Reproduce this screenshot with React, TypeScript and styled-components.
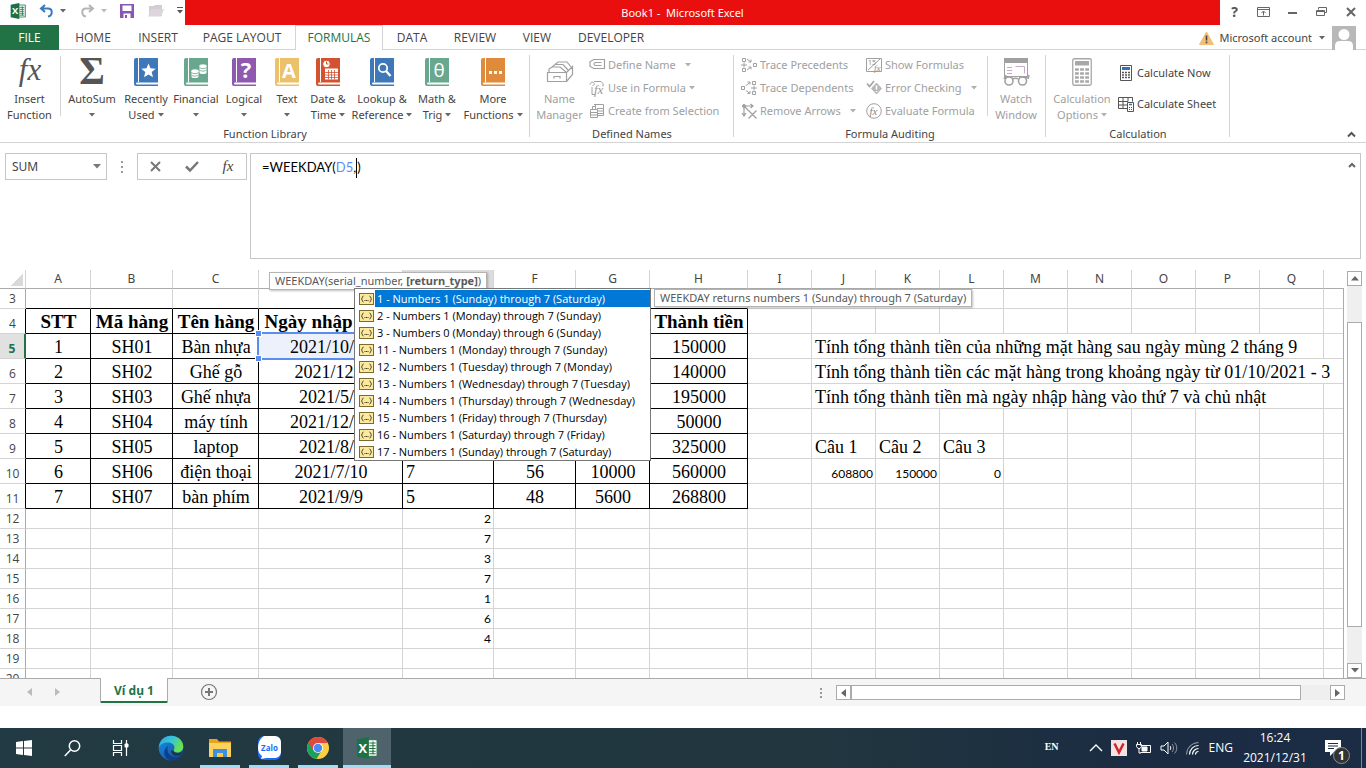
import React from "react";
import styled, { createGlobalStyle, css } from "styled-components";

const ui = `"Noto Sans", "Open Sans", sans-serif`;
const narrow = `"Open Sans", "Noto Sans", sans-serif`;
const serif = `"Liberation Serif", serif`;
const calibri = `Lato, "Open Sans", sans-serif`;
const line = "#d4d4d4";
const edge = "#ababab";
const green = "#217346";

const GlobalStyle = createGlobalStyle`
  *, *::before, *::after { box-sizing: border-box; }
  body { margin: 0; background: #fff; color: #444; font-family: ${ui}; font-size: 11px; line-height: 16px; }
  button, input, textarea { font: inherit; color: inherit; margin: 0; padding: 0; border: 0; background: none; border-radius: 0; outline: 0; }
  svg { display: block; flex: none; overflow: visible; }
`;

const Window = styled.div`
  display: flex;
  flex-direction: column;
  height: 100vh;
  min-height: 480px;
  overflow: hidden;
`;

/* ---------- title bar ---------- */

const TitleBar = styled.header`
  display: flex;
  height: 25px;
  flex: none;
`;
const QuickAccess = styled.div`
  display: flex;
  align-items: center;
  width: 185px;
  padding: 0 2px 4px 10px;
  justify-content: space-between;
`;
const IconButton = styled.button`
  display: flex;
  align-items: center;
  justify-content: center;
  gap: 6px;
`;
const Title = styled.h1`
  flex: 1;
  margin: 0;
  padding-right: 40px;
  background: #e90f0f;
  color: #fff;
  font-size: 11px;
  font-weight: 400;
  line-height: 26px;
  text-align: center;
  white-space: pre;
`;
const WindowButtons = styled.div`
  display: flex;
  padding-right: 1px;
`;
const WindowButton = styled(IconButton)`
  width: 29px;
  height: 23px;
  font-size: 14px;
  font-weight: 700;
  color: #555;
`;

/* ---------- ribbon tabs ---------- */

const TabRow = styled.nav`
  display: flex;
  flex: none;
  height: 25px;
  box-shadow: inset 0 -1px ${line};
  font-family: ${narrow};
  font-size: 12px;
`;
const Tab = styled.button<{ $w: number; $kind?: "file" | "active" }>`
  width: ${(p) => p.$w}px;
  height: 25px;
  ${(p) => p.$kind === "file" && css`background: ${green}; color: #fff;`}
  ${(p) =>
    p.$kind === "active" &&
    css`background: #fff; color: ${green}; border: 1px solid ${line}; border-bottom: 0;`}
`;
const Account = styled.div`
  display: flex;
  align-items: center;
  gap: 5px;
  margin-left: auto;
  padding-right: 10px;
  font-family: ${ui};
  font-size: 11px;
`;
const AccountButton = styled(IconButton)`
  gap: 7px;
  margin-right: 2px;
`;

/* ---------- ribbon ---------- */

const Ribbon = styled.section`
  display: flex;
  flex: none;
  height: 93px;
  border-bottom: 1px solid ${line};
`;
const Group = styled.div<{ $w: number }>`
  display: flex;
  flex-direction: column;
  flex: none;
  width: ${(p) => p.$w}px;
  padding-top: 6px;
  background: linear-gradient(${line}, ${line}) right 5px / 1px 82px no-repeat;
`;
const GroupBody = styled.div<{ $indent?: boolean }>`
  display: flex;
  height: 70px;
  padding-left: ${(p) => (p.$indent ? 7 : 0)}px;
`;
const GroupLabel = styled.div`
  height: 16px;
  text-align: center;
`;
const Big = styled.button<{ $w: number; $off?: boolean }>`
  display: flex;
  flex-direction: column;
  align-items: center;
  width: ${(p) => p.$w}px;
  flex: none;
  color: ${(p) => (p.$off ? "#a0a0a0" : "#444")};
  white-space: nowrap;
`;
const BigIcon = styled.span`
  display: flex;
  align-items: center;
  justify-content: center;
  height: 32px;
  margin-bottom: 3px;
`;
const BigLine = styled.span`
  display: flex;
  align-items: center;
  gap: 3px;
  height: 16px;
`;
const Rule = styled.i`
  width: 1px;
  height: 60px;
  margin: 0 1px;
  background: ${line};
`;
const SmallColumn = styled.div<{ $w: number; $loose?: boolean }>`
  display: flex;
  flex-direction: column;
  flex: none;
  width: ${(p) => p.$w}px;
  gap: ${(p) => (p.$loose ? 15 : 7)}px;
  padding-top: ${(p) => (p.$loose ? 9 : 1)}px;
`;
const Small = styled.button<{ $off?: boolean; $far?: boolean }>`
  display: flex;
  align-items: center;
  gap: 3px;
  height: 16px;
  color: ${(p) => (p.$off ? "#a0a0a0" : "#444")};
  white-space: nowrap;
  ${(p) => p.$far && css`svg:last-child { margin-left: 6px; }`}
`;
const IconSlot = styled.span`
  display: flex;
  justify-content: center;
  width: 16px;
`;
const Collapse = styled(IconButton)`
  margin: auto 10px 4px auto;
`;

/* ---------- formula bar ---------- */

const FormulaRow = styled.section`
  display: flex;
  flex: none;
  align-items: flex-start;
  padding: 10px 5px 11px;
`;
const NameBox = styled.div`
  display: flex;
  align-items: center;
  width: 102px;
  height: 27px;
  padding: 0 5px 0 6px;
  border: 1px solid #c6c6c6;
`;
const NameInput = styled.input`
  flex: 1;
  min-width: 0;
  font-size: 12px;
`;
const Dots = styled.span`
  display: flex;
  align-items: center;
  justify-content: center;
  width: 30px;
  height: 27px;
`;
const EditButtons = styled.div`
  display: flex;
  width: 110px;
  height: 27px;
  margin-right: 3px;
  border: 1px solid #c6c6c6;
  & > button { flex: 1; }
`;
const FormulaBox = styled.div`
  position: relative;
  flex: 1;
  height: 106px;
  border: 1px solid #c6c6c6;
  color: #000;
  font-family: ${calibri};
  font-size: 13px;
  line-height: 18px;
`;
const FormulaInput = styled.textarea`
  display: block;
  width: 100%;
  height: 100%;
  padding: 4px 28px 4px 11px;
  color: transparent;
  resize: none;
`;
const FormulaPaint = styled.div`
  position: absolute;
  inset: 0;
  display: flex;
  align-items: flex-start;
  padding: 4px 28px 4px 11px;
  pointer-events: none;
`;
const Ref = styled.span`
  color: #5b8ff9;
`;
const Caret = styled.i`
  width: 1px;
  height: 20px;
  background: #000;
`;
const BoxArrow = styled(IconButton)`
  position: absolute;
  top: 8px;
  right: 4px;
`;

/* ---------- sheet ---------- */

const SheetArea = styled.section`
  position: relative;
  display: flex;
  flex: 1;
  min-height: 0;
  border-bottom: 1px solid ${edge};
`;
const SheetClip = styled.div`
  flex: 1;
  overflow: hidden;
  position: relative;
`;
const Sheet = styled.table`
  table-layout: fixed;
  width: 1600px;
  border-collapse: separate;
  border-spacing: 0;
  color: #000;
`;
const ColHead = styled.th<{ $on?: boolean }>`
  height: 19px;
  padding: 0;
  border-right: 1px solid ${line};
  border-bottom: 1px solid ${edge};
  background: ${(p) => (p.$on ? "#dcdcdc" : "#fff")};
  color: #444;
  font-size: 12px;
  font-weight: 400;
  line-height: 18px;
`;
const Corner = styled(ColHead)`
  background: linear-gradient(135deg, transparent 50%, #d9d9d9 50%) 11px 4px / 12px 12px no-repeat;
`;
const RowHead = styled.th<{ $on?: boolean; $black?: boolean }>`
  padding: 0;
  border-right: 1px solid ${(p) => (p.$black ? "#000" : edge)};
  border-bottom: 1px solid ${line};
  color: #444;
  font-family: ${narrow};
  font-size: 12px;
  font-weight: 400;
  line-height: 18px;
  vertical-align: bottom;
  ${(p) =>
    p.$on &&
    css`background: #e1e1e1; color: ${green}; font-weight: 700; border-right: 2px solid ${green};`}
`;
const Row = styled.tr<{ $h: number }>`
  height: ${(p) => p.$h}px;
`;
const Cell = styled.td<{ $box?: boolean; $under?: boolean; $align?: string; $calibri?: boolean; $bold?: boolean; $ref?: boolean }>`
  position: ${(p) => (p.$ref ? "relative" : "static")};
  padding: ${(p) => (p.$calibri ? 0 : 2)}px 2px 0 3px;
  border-right: 1px solid ${(p) => (p.$box ? "#000" : line)};
  border-bottom: 1px solid ${(p) => (p.$box || p.$under ? "#000" : line)};
  background: ${(p) => (p.$ref ? "#edf1fb" : "#fff")};
  font-family: ${(p) => (p.$calibri ? calibri : serif)};
  font-size: ${(p) => (p.$calibri ? 12 : p.$bold ? 19 : 18)}px;
  font-weight: ${(p) => (p.$bold ? 700 : 400)};
  line-height: ${(p) => (p.$calibri ? 18 : p.$under ? 16 : 20)}px;
  text-align: ${(p) => p.$align || "left"};
  vertical-align: ${(p) => (p.$calibri ? "bottom" : "middle")};
  white-space: nowrap;
  overflow: ${(p) => (p.$ref ? "visible" : "hidden")};
  ${(p) => p.$bold && css`padding-left: 2px; padding-right: 1px;`}
`;
const RefFrame = styled.span`
  position: absolute;
  inset: -2px;
  border: 2px solid #5b8def;
`;
const Handle = styled.i<{ $at: string }>`
  position: absolute;
  width: 7px;
  height: 7px;
  background: #5b8def;
  border: 1px solid #fff;
  ${(p) => (p.$at.includes("t") ? "top: -4px;" : "bottom: -4px;")}
  ${(p) => (p.$at.includes("l") ? "left: -4px;" : "right: -4px;")}
`;
const SideBar = styled.div`
  display: flex;
  flex-direction: column;
  flex: none;
  width: 22px;
  padding: 1px 4px 0 3px;
`;
const SideEdge = styled.i`
  flex: none;
  width: 1px;
  margin-top: 18px;
  background: ${edge};
`;
const ScrollButton = styled(IconButton)`
  flex: none;
  width: 15px;
  height: 15px;
  border: 1px solid ${edge};
  background: #fff;
`;
const Track = styled.div<{ $grow: number }>`
  flex: ${(p) => p.$grow} 1 0;
  background: #efefef;
`;
const Thumb = styled.div<{ $grow: number }>`
  flex: ${(p) => p.$grow} 1 0;
  border: 1px solid ${edge};
  background: #fff;
`;

/* ---------- floating helpers ---------- */

const Tip = styled.div<{ $x: number; $y: number }>`
  position: absolute;
  left: ${(p) => p.$x}px;
  top: ${(p) => p.$y}px;
  height: 18px;
  padding: 0 5px;
  border: 1px solid #b4b4b4;
  background: #fff;
  box-shadow: 1px 1px 2px rgba(0, 0, 0, 0.25);
  color: #595959;
  line-height: 15px;
  white-space: nowrap;
`;
const Options = styled.ul`
  position: absolute;
  left: 354px;
  top: 18px;
  width: 297px;
  margin: 0;
  padding: 1px 0 0;
  border: 1px solid #777;
  background: #fff;
  color: #000;
  font-family: ${narrow};
  list-style: none;
`;
const Option = styled.li`
  display: flex;
  align-items: center;
  height: 17px;
  padding-left: 4px;
`;
const OptionText = styled.span<{ $on?: boolean }>`
  flex: 1;
  height: 17px;
  margin-left: 1px;
  padding-left: 2px;
  line-height: 18px;
  ${(p) => p.$on && css`background: #0078d7; color: #fff;`}
`;

/* ---------- sheet tabs ---------- */

const SheetTabs = styled.section`
  display: flex;
  flex: none;
  align-items: flex-start;
  height: 27px;
  margin-bottom: 22px;
  background: #f5f5f5;
`;
const TabArrows = styled.div`
  display: flex;
  align-items: center;
  gap: 23px;
  width: 100px;
  height: 26px;
  padding-left: 27px;
`;
const SheetTab = styled.button`
  position: relative;
  height: 25px;
  width: 68px;
  margin-top: -1px;
  padding-top: 1px;
  border: solid ${edge};
  border-width: 0 1px;
  box-shadow: inset 0 -2px ${green};
  background: #fff;
  color: ${green};
  font-size: 12px;
  font-weight: 700;
`;
const AddSheet = styled(IconButton)`
  height: 26px;
  margin-left: 32px;
`;
const HScroll = styled.div`
  display: flex;
  align-items: center;
  width: 539px;
  height: 27px;
  margin: 0 21px 0 auto;
  & > div { height: 15px; }
`;

/* ---------- taskbar ---------- */

const Taskbar = styled.footer`
  display: flex;
  flex: none;
  height: 40px;
  background: linear-gradient(90deg, #223a43 0%, #21363f 60%, #1a2b42 85%, #1b2c45 100%);
  color: #fff;
`;
const Apps = styled.div`
  display: flex;
  gap: 1px;
  margin-left: 3px;
`;
const TaskButton = styled(IconButton)<{ $state?: "open" | "front" }>`
  width: 48px;
  height: 40px;
  background: ${(p) => (p.$state === "front" ? "#4f636c" : "none")};
  ${(p) =>
    p.$state === "open" &&
    css`background: linear-gradient(#9fdcf5, #9fdcf5) center bottom / 40px 3px no-repeat;`}
  ${(p) => p.$state === "front" && css`box-shadow: inset 0 -3px #9fdcf5;`}
`;
const Tray = styled.div`
  display: flex;
  align-items: center;
  margin-left: auto;
  gap: 8px;
  font-family: ${narrow};
  font-size: 12px;
`;
const InputMode = styled.span`
  margin: 0 22px 4px 0;
  font: 700 10px ${serif};
`;
const Language = styled.span`
  margin-left: 2px;
`;
const Clock = styled.time`
  width: 68px;
  text-align: center;
  line-height: 20px;
`;
const Notify = styled(IconButton)`
  position: relative;
  width: 45px;
  height: 40px;
  margin-right: 4px;
  padding-right: 12px;
  border-right: 1px solid #7b8795;
`;
const Badge = styled.span`
  position: absolute;
  right: 11px;
  bottom: 4px;
  width: 17px;
  height: 17px;
  border: 1px solid #8c8f94;
  border-radius: 9px;
  background: #333;
  font-weight: 700;
  line-height: 15px;
`;

/* ---------- icons ---------- */

const Down = ({ c = "#666" }: { c?: string }) => (
  <svg width="6" height="4"><path d="M0 0h6L3 3.5z" fill={c} /></svg>
);

const ExcelLogo = ({ size }: { size: number }) => (
  <svg width={size} height={size} viewBox="0 0 24 24">
    <path d="M13 3h10v18H13z" fill="#fff" stroke={green} strokeWidth="1.2" />
    <path d="M14.5 6.5h7M14.5 9.5h7M14.5 12.5h7M14.5 15.5h7M14.5 18.2h7M18.5 5v14" stroke={green} strokeWidth="1.2" />
    <path d="M14 0v24L1 21.5v-19z" fill="#1e7145" />
    <text x="7.5" y="17" fontSize="14" fontWeight="700" fontFamily="Open Sans" fill="#fff" textAnchor="middle">X</text>
  </svg>
);

const Book = ({ color, children }: { color: string; children: React.ReactNode }) => (
  <svg width="24" height="28" viewBox="0 0 24 28">
    <path d="M2 0h22v28H2a2 2 0 0 1-2-2V2a2 2 0 0 1 2-2z" fill={color} />
    <path d="M4.5 0v24" stroke="#fff" />
    <path d="M24 24.5H3a1 1 0 0 0 0 2h21z" fill="#fff" />
    {children}
  </svg>
);
const BookText = ({ t, size = 20 }: { t: string; size?: number }) => (
  <text x="14" y="19.5" fontSize={size} fontWeight="700" fontFamily="Open Sans" fill="#fff" textAnchor="middle">{t}</text>
);

const Fx = ({ w, h, size, color = "#555" }: { w: number; h: number; size: number; color?: string }) => (
  <svg width={w} height={h}>
    <text x={w / 2} y={h * 0.74} fontSize={size} fontStyle="italic" fontFamily="Liberation Serif" fill={color} textAnchor="middle">fx</text>
  </svg>
);

const S = ({ children, c = "#a0a0a0", w = 16, h = 16 }: { children: React.ReactNode; c?: string; w?: number; h?: number }) => (
  <svg width={w} height={h} viewBox={`0 0 ${w} ${h}`} fill="none" stroke={c} strokeWidth="1">{children}</svg>
);

const DefineIcon = () => (
  <S><path d="M5 2.5h10.500v9H5L1 9.500V4.500zM12.500 5.500h-6a1.500 1.500 0 0 0 0 3h6" strokeWidth="1.200" /></S>
);
const UseIcon = () => (
  <S>
    <path d="M1 4.500c0-2 2-3 3.500-2s1 3-1 3M5 1.500h7l2 2v3M3 7v7.500h3" />
    <text x="5" y="14" fontSize="13" fontStyle="italic" fontFamily="Liberation Serif" fill="#999" stroke="none">fx</text>
  </S>
);
const CreateIcon = () => (
  <S>
    <path d="M5 1.500h9.500v11H9" />
    <path d="M1.500 6.500h7v8h-7zM1.500 9.500h7M1.500 12h7M3.500 6.500v-3h3M6.500 1.500v5" />
    <path d="M8 5.500h6M8 8h6M8 10.500h6" />
  </S>
);
const Precedents = () => (
  <S>
    <path d="M1.500 1.500h3v3h-3zM1.500 11.500h3v3h-3zM12.500 6.500h3v3h-3zM0 8h6M3 5.500v5" />
    <path d="M6 2l4 3M10 2.500V5H7.500M6 13l4-3M7.500 10H10v2.500" />
  </S>
);
const Dependents = () => (
  <S>
    <path d="M11.500 1.500h3v3h-3zM11.500 11.500h3v3h-3zM.5 6.500h3v3h-3zM10 8h6M13 5.500v5" />
    <path d="M5 5.500l4-3M6.500 2H9v2.500M5 10.500l4 3M9 11v2.500H6.500" />
  </S>
);
const RemoveArrows = () => (
  <S>
    <path d="M3 3v9M1 10l2 3 2-3M3 3h9M9.500 1L12 3 9.500 5M3 3l6 6M7.500 7.500l8 8M15.500 7.500l-8 8" strokeWidth="1.200" />
    <circle cx="3" cy="3" r="1.500" fill="#a0a0a0" />
  </S>
);
const ShowFormulas = () => (
  <S>
    <path d="M.5 1.500h15v13H.5zM2 13L14 2" />
    <text x="2" y="8" fontSize="7" fontFamily="Open Sans" fill="#888" stroke="none">15</text>
    <text x="8" y="14" fontSize="9" fontStyle="italic" fontFamily="Liberation Serif" fill="#888" stroke="none">fx</text>
  </S>
);
const ErrorChecking = () => (
  <S>
    <path d="M1 3.500l2.500 3L8 1" strokeWidth="1.500" />
    <path d="M10.500 3l5 5.500-5 5.500-5-5.500z" fill="#b8b8b8" stroke="#b8b8b8" />
    <path d="M10.500 5.500v4M10.500 11v1" stroke="#fff" strokeWidth="1.500" />
  </S>
);
const Evaluate = () => (
  <S>
    <circle cx="8" cy="8" r="7.300" />
    <text x="7.500" y="11.500" fontSize="11" fontStyle="italic" fontFamily="Liberation Serif" fill="#888" stroke="none" textAnchor="middle">fx</text>
  </S>
);
const NameManager = () => (
  <S w={28} h={24}>
    <path d="M1.500 12.500h19v9h-19zM20.500 12.500l6-6v8l-6 7M8 18.500v-2h6v2" strokeWidth="1.200" />
    <path d="M3 12V9l3-2h8l6 5M6 7l3-2.500h8l5.500 6M9 4.500L12 2h9l4 5" strokeWidth="1.200" />
  </S>
);
const Watch = () => (
  <S w={28} h={30}>
    <path d="M2.500 1.500h23v18h-23z" />
    <path d="M2 1h24v5H2z" fill="#a0a0a0" stroke="none" />
    <path d="M5 10.500h5M5 13.500h5M5 16.500h5M13.500 9.500h9v7" stroke="#c9a9c9" />
    <path d="M2.500 20.500h8M17.500 20.500h8M11 22c1-1 4-1 5 0M2 22l2-4M26 22l1-4" strokeWidth="1.500" />
    <circle cx="7" cy="24" r="4" fill="#fff" strokeWidth="1.600" />
    <circle cx="20.500" cy="24" r="4" fill="#fff" strokeWidth="1.600" />
  </S>
);
const Calculator = ({ w, h, c, screen }: { w: number; h: number; c: string; screen: string }) => (
  <svg width={w} height={h} viewBox="0 0 20 28" preserveAspectRatio="none">
    <rect x=".75" y=".75" width="18.500" height="26.500" rx="1.500" fill="#fff" stroke={c} strokeWidth="1.300" />
    <path d="M3 3h14v4.500H3z" fill={screen} />
    <path d="M3 11.500h14M3 15.500h14M3 19.500h14M3 23.500h14" stroke={c} strokeWidth="2.600" strokeDasharray="3.800 1.300" />
  </svg>
);
const SmallCalculator = () => (
  <IconSlot>
    <S w={12} h={16} c="#555">
      <path d="M.5.5h11v15H.5z" fill="#fff" />
      <path d="M2 2h8v3H2z" fill="#2e75b6" stroke="none" />
      <path d="M2 7.500h8M2 10h8M2 12.500h8" strokeWidth="1.500" strokeDasharray="2 1" />
    </S>
  </IconSlot>
);
const CalcSheet = () => (
  <S w={16} h={16} c="#555">
    <path d="M10 12.500H.5v-11h14v4M.5 5.500H10M.5 9H9M5 1.500v11M10 1.500v4" />
    <path d="M9.500 6.500h6v9h-6z" fill="#fff" />
    <path d="M11 8.500h3" stroke="#2e75b6" strokeWidth="1.500" />
    <path d="M11 11.500h3M11 13.500h3" strokeDasharray="1 1" />
  </S>
);
const BookDate = () => (
  <Book color="#d35230">
    <path d="M9 10.500h13v11H9z" fill="#fff" />
    <path d="M9 14.500h13M9 17h13M9 19.500h13M12.500 12v9.500M15.500 12v9.500M18.500 12v9.500" stroke="#d35230" strokeWidth=".8" />
    <circle cx="10.500" cy="6" r="3.800" fill="#fff" stroke="#d35230" />
    <path d="M10.500 3.500V6h2" stroke="#d35230" fill="none" />
  </Book>
);
const BookMoney = () => (
  <Book color="#6aa78f">
    <path d="M15.500 8.500v6c0 2 7 2 7 0v-6" fill="#fff" />
    <ellipse cx="19" cy="8" rx="3.700" ry="1.700" fill="#fff" />
    <path d="M15.500 9.500c1 1.500 6 1.500 7 0M15.500 12c1 1.500 6 1.500 7 0" stroke="#6aa78f" strokeWidth=".8" fill="none" />
    <path d="M7.500 13v5.500c0 2 7 2 7 0V13" fill="#fff" />
    <ellipse cx="11" cy="13" rx="3.700" ry="1.700" fill="#fff" />
    <path d="M7.500 14.500c1 1.500 6 1.500 7 0M7.500 17c1 1.500 6 1.500 7 0" stroke="#6aa78f" strokeWidth=".8" fill="none" />
  </Book>
);

const ParamIcon = () => (
  <svg width="15" height="12">
    <rect x=".5" y=".5" width="14" height="11" fill="#fbe9a0" stroke="#7d6a2c" />
    <path d="M4.500 3C3 3 3.500 6 2.500 6 3.500 6 3 9 4.500 9M10.500 3c1.500 0 1 3 2 3-1 0-.5 3-2 3" stroke="#3d3413" fill="none" />
    <path d="M5.500 7.500h1M7 7.500h1M8.500 7.500h1" stroke="#3d3413" />
  </svg>
);

const Edge = () => (
  <svg width="26" height="26" viewBox="0 0 26 26">
    <defs>
      <linearGradient id="edgeTop" x1="0" y1="0" x2="1" y2=".5"><stop offset="0" stopColor="#2ba5e8" /><stop offset=".5" stopColor="#36c3d8" /><stop offset="1" stopColor="#69e34b" /></linearGradient>
      <linearGradient id="edgeLow" x1="0" y1="0" x2="1" y2="1"><stop offset="0" stopColor="#1b8fe0" /><stop offset="1" stopColor="#114a9c" /></linearGradient>
    </defs>
    <circle cx="13" cy="13" r="12.300" fill="url(#edgeLow)" />
    <path d="M.7 12.500C1.500 5 7 .7 13 .7c7.500 0 12.300 5.300 12.300 10.800 0 3.500-2.500 6-6 6-2.300 0-4-.8-4-1.800 0-.7 1.200-1.200 1.200-3.200 0-2.500-2.500-5-6.300-5C5.500 7.500 2 9.500.7 12.500z" fill="url(#edgeTop)" />
    <path d="M10 11c-2 5 1 11 8 11 2.500 0 4.500-.7 5.800-2-2 3.500-5.800 5.300-9.800 5.300C8 25.300 5.500 20 6.500 16c.6-2.500 2-4 3.500-5z" fill="#0d3f8c" />
    <path d="M15.500 15.500c.5 1.500 2 2.500 4.500 2.500 1.800 0 3.500-.6 4.600-1.800l-1.600 3.500c-3 2-9 1.500-10-3 .3-1 1.500-1.700 2.500-1.200z" fill="#213742" />
  </svg>
);
const Explorer = () => (
  <svg width="22" height="20" viewBox="0 0 22 20">
    <path d="M0 1h8l2 2.500h12V7H0z" fill="#e8a21c" />
    <path d="M0 5h22v14H0z" fill="#fbd25e" />
    <path d="M4 19v-8h14v8h-4v-4H8v4z" fill="#3f8fdc" />
    <path d="M8 15h6v4H8z" fill="#f7c948" />
  </svg>
);
const Zalo = () => (
  <svg width="24" height="24" viewBox="0 0 24 24">
    <rect x="1" y="0" width="23" height="24" rx="6" fill="#1a6cff" />
    <path d="M7 0h11a6 6 0 0 1 6 6v10a6 6 0 0 1-6 6H9l-5 1 1-3c-3-2-4-5-4-8s1-9 6-12z" fill="#fff" />
    <text x="12.500" y="14.500" fontSize="8" fontWeight="700" fontFamily="Open Sans" fill="#1a6cff" textAnchor="middle">Zalo</text>
  </svg>
);
const Chrome = () => (
  <svg width="22" height="22" viewBox="0 0 22 22">
    <circle cx="11" cy="11" r="11" fill="#ffcd40" />
    <path d="M11 11L1.500 5.500A11 11 0 0 0 9.500 21.900L15 13z" fill="#1ba15d" />
    <path d="M11 6h9.800A11 11 0 0 0 1.500 5.500l5 8z" fill="#e04a3c" />
    <circle cx="11" cy="11" r="5" fill="#fff" />
    <circle cx="11" cy="11" r="4.200" fill="#4a8af4" />
  </svg>
);

/* ---------- data ---------- */

const columns: [string, number][] = [
  ["A", 65], ["B", 82], ["C", 86], ["D", 144], ["E", 91], ["F", 82], ["G", 74], ["H", 98],
  ["I", 64], ["J", 64], ["K", 64], ["L", 64], ["M", 64], ["N", 64], ["O", 64], ["P", 64], ["Q", 64], ["R", 64],
];

const boxed: Record<number, string[]> = {
  4: ["STT", "Mã hàng", "Tên hàng", "Ngày nhập hàng", "", "", "", "Thành tiền"],
  5: ["1", "SH01", "Bàn nhựa", "2021/10/10", "", "", "", "150000"],
  6: ["2", "SH02", "Ghế gỗ", "2021/12/5", "", "", "", "140000"],
  7: ["3", "SH03", "Ghế nhựa", "2021/5/6", "", "", "", "195000"],
  8: ["4", "SH04", "máy tính", "2021/12/12", "", "", "", "50000"],
  9: ["5", "SH05", "laptop", "2021/8/8", "", "", "", "325000"],
  10: ["6", "SH06", "điện thoại", "2021/7/10", "7", "56", "10000", "560000"],
  11: ["7", "SH07", "bàn phím", "2021/9/9", "5", "48", "5600", "268800"],
};
const notes: Record<number, [string, number]> = {
  5: ["Tính tổng thành tiền của những mặt hàng sau ngày mùng 2 tháng 9", 8],
  6: ["Tính tổng thành tiền các mặt hàng trong khoảng ngày từ 01/10/2021 - 3", 9],
  7: ["Tính tổng thành tiền mà ngày nhập hàng vào thứ 7 và chủ nhật", 8],
};
const questions = ["Câu 1", "Câu 2", "Câu 3"];
const totals = ["608800", "150000", "0"];
const weekdays: Record<number, string> = { 12: "2", 13: "7", 14: "3", 15: "7", 16: "1", 17: "6", 18: "4" };

const returnTypes = [
  "1 - Numbers 1 (Sunday) through 7 (Saturday)",
  "2 - Numbers 1 (Monday) through 7 (Sunday)",
  "3 - Numbers 0 (Monday) through 6 (Sunday)",
  "11 - Numbers 1 (Monday) through 7 (Sunday)",
  "12 - Numbers 1 (Tuesday) through 7 (Monday)",
  "13 - Numbers 1 (Wednesday) through 7 (Tuesday)",
  "14 - Numbers 1 (Thursday) through 7 (Wednesday)",
  "15 - Numbers 1 (Friday) through 7 (Thursday)",
  "16 - Numbers 1 (Saturday) through 7 (Friday)",
  "17 - Numbers 1 (Sunday) through 7 (Saturday)",
];

const tabs: [string, number, ("file" | "active")?][] = [
  ["FILE", 59, "file"], ["HOME", 68], ["INSERT", 62], ["PAGE LAYOUT", 106], ["FORMULAS", 88, "active"],
  ["DATA", 58], ["REVIEW", 68], ["VIEW", 56], ["DEVELOPER", 92],
];

/* ---------- parts ---------- */

type BigProps = { w: number; icon: React.ReactNode; one: string; two?: string; arrow?: boolean; off?: boolean };
const BigButton = ({ w, icon, one, two, arrow = true, off }: BigProps) => (
  <Big $w={w} $off={off}>
    <BigIcon>{icon}</BigIcon>
    <BigLine>{one}</BigLine>
    <BigLine>{two}{arrow && <Down c={off ? "#b0b0b0" : "#666"} />}</BigLine>
  </Big>
);
type SmallProps = { icon: React.ReactNode; text: string; arrow?: boolean; far?: boolean; off?: boolean };
const SmallButton = ({ icon, text, arrow, far, off = true }: SmallProps) => (
  <Small $off={off} $far={far}>{icon}<span>{text}</span>{arrow && <Down c="#b0b0b0" />}</Small>
);

const SheetRow = ({ n }: { n: number }) => {
  const data = boxed[n];
  const cells: React.ReactNode[] = [];
  for (let c = 0; c < columns.length; c++) {
    if (data && c < 8) {
      const ref = n === 5 && c === 3;
      cells.push(
        <Cell key={c} $box $bold={n === 4} $ref={ref} $align={c === 4 ? "left" : "center"}>
          {data[c]}
          {ref && <RefFrame><Handle $at="tl" /><Handle $at="tr" /><Handle $at="bl" /><Handle $at="br" /></RefFrame>}
        </Cell>
      );
    } else if (notes[n] && c === 9) {
      cells.push(<Cell key={c} colSpan={notes[n][1]}>{notes[n][0]}</Cell>);
      c += notes[n][1] - 1;
    } else if (n === 9 && c >= 9 && c < 12) {
      cells.push(<Cell key={c}>{questions[c - 9]}</Cell>);
    } else if (n === 10 && c >= 9 && c < 12) {
      cells.push(<Cell key={c} $calibri $align="right">{totals[c - 9]}</Cell>);
    } else if (weekdays[n] && c === 4) {
      cells.push(<Cell key={c} $calibri $align="right">{weekdays[n]}</Cell>);
    } else {
      cells.push(<Cell key={c} $under={n === 3 && c < 8} />);
    }
  }
  return (
    <Row $h={data ? 25 : 20}>
      <RowHead scope="row" $on={n === 5} $black={!!data}>{n}</RowHead>
      {cells}
    </Row>
  );
};

export default function App() {
  return (
    <Window>
      <GlobalStyle />
      <TitleBar>
        <QuickAccess>
          <ExcelLogo size={16} />
          <IconButton aria-label="Undo">
            <svg width="15" height="14" fill="none" stroke="#3b78bd" strokeWidth="2"><path d="M6 1L2 4.500 6 8M2 4.500h7c5 0 5 7 0 8" /></svg>
            <Down />
          </IconButton>
          <IconButton aria-label="Redo">
            <svg width="15" height="14" fill="none" stroke="#b5b5b5" strokeWidth="2"><path d="M9 1l4 3.500L9 8M13 4.500H6c-5 0-5 7 0 8" /></svg>
            <Down c="#bbb" />
          </IconButton>
          <IconButton aria-label="Save">
            <svg width="14" height="14"><path d="M0 0h14v14H0z" fill="#8a56b0" /><path d="M2.500 1.500h9V7h-9zM3.500 9.500h7V14h-7z" fill="#fff" /><path d="M5 11h2v3H5z" fill="#8a56b0" /></svg>
          </IconButton>
          <IconButton aria-label="Open">
            <svg width="16" height="13"><path d="M1 12V2h5l1-1h7v11z" fill="#d3ccd3" /><path d="M0 12.500L3 5h13l-3 7.500z" fill="#dcd6dc" /></svg>
          </IconButton>
          <IconButton aria-label="Customize Quick Access Toolbar">
            <svg width="6" height="7"><path d="M0 .5h6" stroke="#555" /><path d="M0 3h6L3 6.500z" fill="#555" /></svg>
          </IconButton>
        </QuickAccess>
        <Title>{"Book1 -  Microsoft Excel"}</Title>
        <WindowButtons>
          <WindowButton aria-label="Help">?</WindowButton>
          <WindowButton aria-label="Ribbon display options">
            <S w={13} h={10} c="#666"><path d="M.5.5h12v9H.5zM.5 2.500h12M6.500 8.500v-4M4.500 6l2-2 2 2" /></S>
          </WindowButton>
          <WindowButton aria-label="Minimize"><S w={10} h={8} c="#666"><path d="M0 5h9" strokeWidth="2" /></S></WindowButton>
          <WindowButton aria-label="Restore"><S w={11} h={10} c="#666"><path d="M2.500 2.500v-2h8v5h-2M.5 3.500h8v5H.5zM.5 4.500h8" /></S></WindowButton>
          <WindowButton aria-label="Close"><S w={10} h={10} c="#666"><path d="M1 1l8 8M9 1L1 9" strokeWidth="2" /></S></WindowButton>
        </WindowButtons>
      </TitleBar>

      <TabRow>
        {tabs.map(([name, w, kind]) => <Tab key={name} $w={w} $kind={kind}>{name}</Tab>)}
        <Account>
          <svg width="15" height="14"><path d="M7.500 1L14.500 13.500H.5z" fill="#f0c078" stroke="#f0c078" strokeLinejoin="round" /><path d="M7.500 4.500v5M7.500 10.500v1.800" stroke="#444" strokeWidth="1.600" /></svg>
          <AccountButton>Microsoft account<Down /></AccountButton>
          <svg width="24" height="24"><path d="M0 0h24v24H0z" fill="#b8b8b8" /><circle cx="12" cy="8.500" r="5.500" fill="#fff" /><path d="M3 24v-4q0-5 5-5h8q5 0 5 5v4z" fill="#fff" /></svg>
        </Account>
      </TabRow>

      <Ribbon>
        <Group $w={530}>
          <GroupBody>
            <BigButton w={59} arrow={false} icon={<Fx w={26} h={32} size={31} />} one="Insert" two="Function" />
            <Rule />
            <BigButton w={60} one="AutoSum" icon={
              <svg width="26" height="30"><text x="13" y="27" fontSize="39" fontWeight="700" fontFamily="Liberation Serif" fill="#555" textAnchor="middle">Σ</text></svg>
            } />
            <BigButton w={48} one="Recently" two="Used" icon={
              <Book color="#3f78b8"><path d="M14.500 5.500l2 4.800 5.200.4-4 3.400 1.300 5.100-4.500-2.800-4.500 2.800 1.300-5.100-4-3.400 5.200-.4z" fill="#fff" /></Book>
            } />
            <BigButton w={52} one="Financial" icon={<BookMoney />} />
            <BigButton w={44} one="Logical" icon={<Book color="#9059b0"><BookText t="?" size={22} /></Book>} />
            <BigButton w={42} one="Text" icon={<Book color="#edc06c"><BookText t="A" /></Book>} />
            <BigButton w={40} one="Date &" two="Time" icon={<BookDate />} />
            <BigButton w={68} one="Lookup &" two="Reference" icon={
              <Book color="#3f78b8"><circle cx="13" cy="10" r="4.200" fill="none" stroke="#fff" strokeWidth="1.800" /><path d="M16 13l4.500 5" stroke="#fff" strokeWidth="2.400" /></Book>
            } />
            <BigButton w={42} one="Math &" two="Trig" icon={
              <Book color="#6aa78f"><text x="14" y="19" fontSize="19" fontFamily="Open Sans" fill="#fff" textAnchor="middle">θ</text></Book>
            } />
            <BigButton w={70} one="More" two="Functions" icon={
              <Book color="#e08a3c"><path d="M8 13h3v3H8zM13 13h3v3h-3zM18 13h3v3h-3z" fill="#fff" /></Book>
            } />
          </GroupBody>
          <GroupLabel>Function Library</GroupLabel>
        </Group>

        <Group $w={204}>
          <GroupBody>
            <BigButton w={59} off arrow={false} icon={<NameManager />} one="Name" two="Manager" />
            <SmallColumn $w={140}>
              <SmallButton icon={<DefineIcon />} text="Define Name" arrow far />
              <SmallButton icon={<UseIcon />} text="Use in Formula" arrow />
              <SmallButton icon={<CreateIcon />} text="Create from Selection" />
            </SmallColumn>
          </GroupBody>
          <GroupLabel>Defined Names</GroupLabel>
        </Group>

        <Group $w={312}>
          <GroupBody $indent>
            <SmallColumn $w={125}>
              <SmallButton icon={<Precedents />} text="Trace Precedents" />
              <SmallButton icon={<Dependents />} text="Trace Dependents" />
              <SmallButton icon={<RemoveArrows />} text="Remove Arrows" arrow far />
            </SmallColumn>
            <SmallColumn $w={120}>
              <SmallButton icon={<ShowFormulas />} text="Show Formulas" />
              <SmallButton icon={<ErrorChecking />} text="Error Checking" arrow far />
              <SmallButton icon={<Evaluate />} text="Evaluate Formula" />
            </SmallColumn>
            <Rule />
            <BigButton w={54} off arrow={false} icon={<Watch />} one="Watch" two="Window" />
          </GroupBody>
          <GroupLabel>Formula Auditing</GroupLabel>
        </Group>

        <Group $w={184}>
          <GroupBody>
            <BigButton w={72} off one="Calculation" two="Options" icon={<Calculator w={20} h={28} c="#a8a8a8" screen="#a8a8a8" />} />
            <SmallColumn $w={110} $loose>
              <SmallButton off={false} icon={<SmallCalculator />} text="Calculate Now" />
              <SmallButton off={false} icon={<CalcSheet />} text="Calculate Sheet" />
            </SmallColumn>
          </GroupBody>
          <GroupLabel>Calculation</GroupLabel>
        </Group>
        <Collapse aria-label="Collapse the ribbon"><S w={9} h={7} c="#555"><path d="M1 5.500l3.500-3.500L8 5.500" strokeWidth="2" /></S></Collapse>
      </Ribbon>

      <FormulaRow>
        <NameBox>
          <NameInput aria-label="Name box" defaultValue="SUM" />
          <IconButton aria-label="Show names"><svg width="8" height="5"><path d="M0 0h8L4 4.500z" fill="#777" /></svg></IconButton>
        </NameBox>
        <Dots><svg width="2" height="12"><path d="M1 0v12" stroke="#999" strokeWidth="2" strokeDasharray="2 3" /></svg></Dots>
        <EditButtons>
          <IconButton aria-label="Cancel"><S w={12} h={11} c="#777"><path d="M1 1l9 9M10 1l-9 9" strokeWidth="2" /></S></IconButton>
          <IconButton aria-label="Enter"><S w={14} h={11} c="#777"><path d="M1 5.500l4 4L13 1" strokeWidth="2.500" /></S></IconButton>
          <IconButton aria-label="Insert function"><Fx w={14} h={18} size={15} color="#444" /></IconButton>
        </EditButtons>
        <FormulaBox>
          <FormulaInput aria-label="Formula bar" spellCheck={false} defaultValue="=WEEKDAY(D5,)" />
          <FormulaPaint aria-hidden="true">
            =WEEKDAY(<Ref>D5</Ref>,<Caret />)
          </FormulaPaint>
          <BoxArrow aria-label="Collapse formula bar"><S w={8} h={6} c="#666"><path d="M1 5l3-3 3 3" strokeWidth="2" /></S></BoxArrow>
        </FormulaBox>
      </FormulaRow>

      <SheetArea>
        <SheetClip>
          <Sheet>
            <colgroup>
              <col style={{ width: 26 }} />
              {columns.map(([name, w]) => <col key={name} style={{ width: w }} />)}
              <col />
            </colgroup>
            <thead>
              <tr>
                <Corner aria-label="Select all" />
                {columns.map(([name]) => <ColHead key={name} scope="col" $on={name === "E"}>{name}</ColHead>)}
              </tr>
            </thead>
            <tbody>
              {Array.from({ length: 18 }, (_, i) => <SheetRow key={i} n={i + 3} />)}
            </tbody>
          </Sheet>
        </SheetClip>
        <SideEdge />
        <SideBar>
          <ScrollButton aria-label="Scroll up"><svg width="8" height="5"><path d="M0 4.500h8L4 0z" fill="#666" /></svg></ScrollButton>
          <Track $grow={36} />
          <Thumb $grow={306} />
          <Track $grow={36} />
          <ScrollButton aria-label="Scroll down"><svg width="8" height="5"><path d="M0 0h8L4 4.500z" fill="#666" /></svg></ScrollButton>
        </SideBar>
        <Tip $x={269} $y={2}>WEEKDAY(serial_number, <b>[return_type]</b>)</Tip>
        <Options role="listbox" aria-label="return_type">
          {returnTypes.map((t, i) => (
            <Option key={t} role="option" aria-selected={i === 0}>
              <ParamIcon />
              <OptionText $on={i === 0}>{t}</OptionText>
            </Option>
          ))}
        </Options>
        <Tip $x={654} $y={19}>WEEKDAY returns numbers 1 (Sunday) through 7 (Saturday)</Tip>
      </SheetArea>

      <SheetTabs>
        <TabArrows>
          <IconButton aria-label="Previous sheet"><svg width="5" height="8"><path d="M5 0v8L0 4z" fill="#bbb" /></svg></IconButton>
          <IconButton aria-label="Next sheet"><svg width="5" height="8"><path d="M0 0v8l5-4z" fill="#bbb" /></svg></IconButton>
        </TabArrows>
        <SheetTab>Ví dụ 1</SheetTab>
        <AddSheet aria-label="New sheet">
          <S w={18} h={18} c="#777"><circle cx="9" cy="9" r="7.500" strokeWidth="1.200" /><path d="M9 5v8M5 9h8" strokeWidth="2" /></S>
        </AddSheet>
        <HScroll>
          <Dots><svg width="2" height="10"><path d="M1 0v10" stroke="#999" strokeWidth="2" strokeDasharray="2 2" /></svg></Dots>
          <ScrollButton aria-label="Scroll left"><svg width="5" height="8"><path d="M5 0v8L0 4z" fill="#666" /></svg></ScrollButton>
          <Thumb $grow={450} />
          <Track $grow={29} />
          <ScrollButton aria-label="Scroll right"><svg width="5" height="8"><path d="M0 0v8l5-4z" fill="#666" /></svg></ScrollButton>
        </HScroll>
      </SheetTabs>

      <Taskbar>
        <TaskButton aria-label="Start">
          <svg width="16" height="16" fill="#fff"><path d="M0 2l7-1v6.500H0zM8 .9L16 0v7.500H8zM0 8.500h7V15l-7-1zM8 8.500h8V16l-8-1z" /></svg>
        </TaskButton>
        <TaskButton aria-label="Search"><S w={17} h={17} c="#fff"><circle cx="10.500" cy="6" r="5.200" strokeWidth="1.500" /><path d="M6.500 10L.8 16" strokeWidth="1.500" /></S></TaskButton>
        <TaskButton aria-label="Task view"><S w={17} h={16} c="#fff"><path d="M1.500 0v3.500h8V0M1.500 5.500h8v5h-8zM1.500 16v-3.500h8V16M14.500 0v16" strokeWidth="1.200" /><path d="M13 4h3v3h-3z" fill="#fff" /></S></TaskButton>
        <Apps>
          <TaskButton aria-label="Edge"><Edge /></TaskButton>
          <TaskButton aria-label="File Explorer" $state="open"><Explorer /></TaskButton>
          <TaskButton aria-label="Zalo" $state="open"><Zalo /></TaskButton>
          <TaskButton aria-label="Chrome" $state="open"><Chrome /></TaskButton>
          <TaskButton aria-label="Excel" $state="front"><ExcelLogo size={22} /></TaskButton>
        </Apps>
        <Tray>
          <InputMode>EN</InputMode>
          <IconButton aria-label="Show hidden icons"><S w={14} h={8} c="#fff"><path d="M1 7l6-6 6 6" strokeWidth="1.400" /></S></IconButton>
          <svg width="16" height="16"><path d="M0 0h16v16H0z" fill="#f3e3e3" /><path d="M3.500 3.500L8 12.500l4.500-9" fill="none" stroke="#d2232a" strokeWidth="2.500" /></svg>
          <S w={17} h={14} c="#fff"><path d="M5.500 4.500h10v7h-10" /><path d="M7 6h5v4H7z" fill="#fff" /><path d="M2.500 1v3M5.500 1v3M1.500 3.500h5v2l-1.500 2h-2L1.500 5.500zM4 8v4h2" /></S>
          <S w={17} h={14} c="#fff"><path d="M1 5h3l4-4v12L4 9H1zM10 5c1 1 1 3 0 4" /><path d="M12 3c2 2 2 6 0 8M14.500 1.500c3 3 3 8 0 11" stroke="#8c9aa6" /></S>
          <S w={14} h={14} c="#fff"><path d="M1.500 13.500a12 12 0 0 1 12-12" stroke="#9aa6b2" /><path d="M4.500 13.500a9 9 0 0 1 9-9M7.500 13.500a6 6 0 0 1 6-6M10.500 13.500a3 3 0 0 1 3-3" strokeWidth="1.200" /></S>
          <Language>ENG</Language>
          <Clock>16:24<br />2021/12/31</Clock>
          <Notify aria-label="Notifications">
            <svg width="16" height="16"><path d="M0 0h16v12H9l-4 4v-4H0z" fill="#fff" /><path d="M3 3.500h10M3 6h10M3 8.500h6" stroke="#1b2c45" /></svg>
            <Badge>1</Badge>
          </Notify>
        </Tray>
      </Taskbar>
    </Window>
  );
}
